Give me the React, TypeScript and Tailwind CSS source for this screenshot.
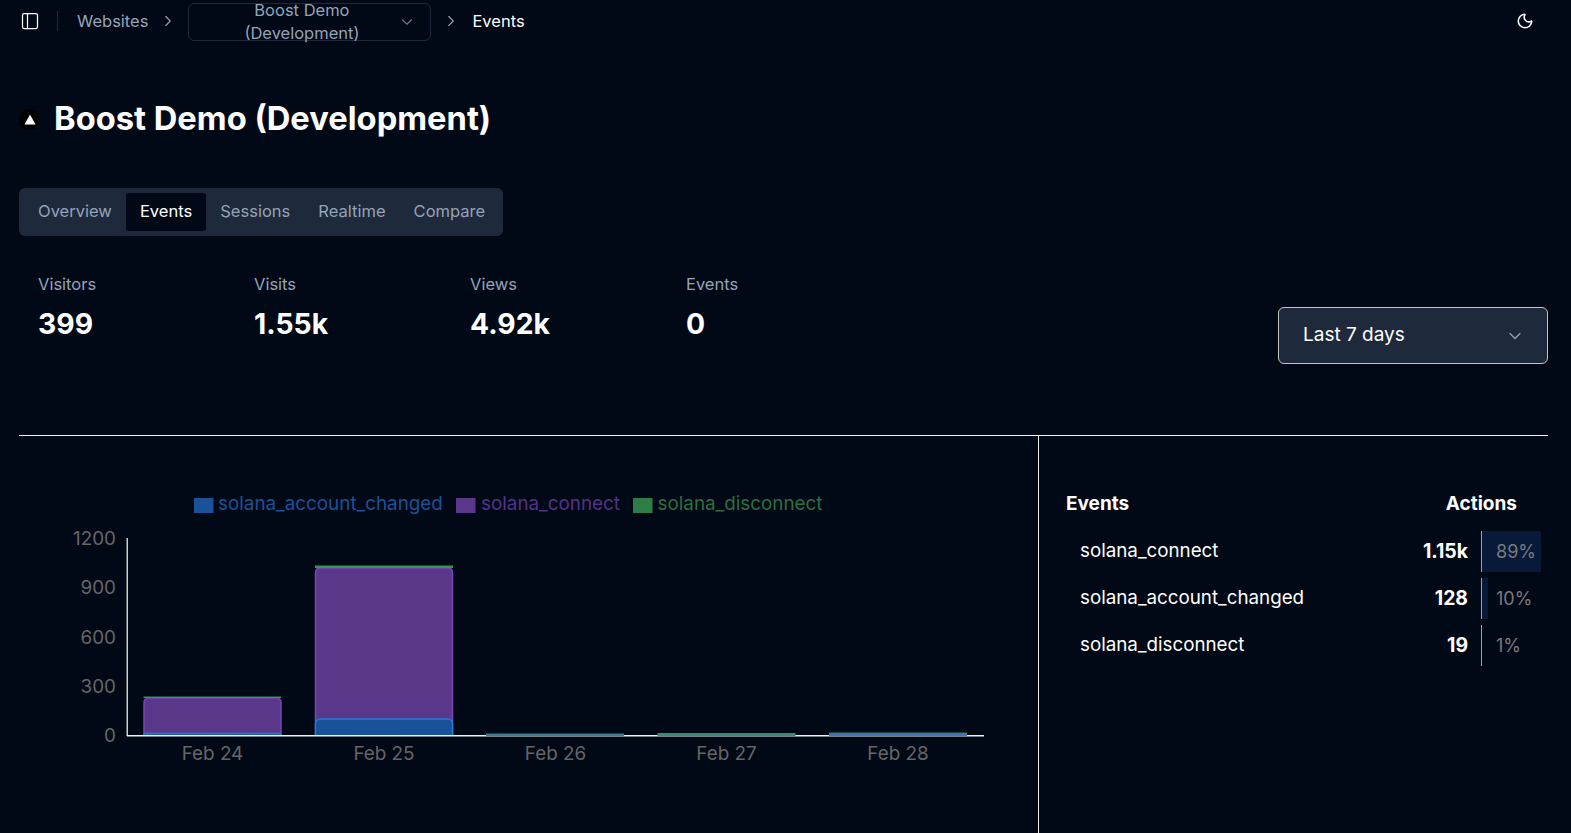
import { ChevronDown, ChevronRight, Moon, PanelLeft } from "lucide-react";

function topRound(x: number, y: number, w: number, h: number, r: number) {
  const rr = Math.min(r, h);
  return `M${x} ${y + h}V${y + rr}Q${x} ${y} ${x + rr} ${y}H${x + w - rr}Q${x + w} ${y} ${x + w} ${y + rr}V${y + h}`;
}

const TABS = ["Overview", "Events", "Sessions", "Realtime", "Compare"];
const STATS = [
  ["Visitors", "399"],
  ["Visits", "1.55k"],
  ["Views", "4.92k"],
  ["Events", "0"],
];
const ROWS = [
  { name: "solana_connect", value: "1.15k", pct: "89%", bar: "w-[59px]" },
  { name: "solana_account_changed", value: "128", pct: "10%", bar: "w-[6px]" },
  { name: "solana_disconnect", value: "19", pct: "1%", bar: "w-0" },
];

function Chart() {
  const blue = "#1a5299";
  const blueS = "#2478de";
  const purple = "#5b378a";
  const purpleS = "#7747b8";
  const green = "#2d7d46";
  const ticks: [string, number][] = [
    ["1200", 538],
    ["900", 587.5],
    ["600", 637],
    ["300", 686],
    ["0", 735.5],
  ];
  const days: [string, number][] = [
    ["Feb 24", 212.5],
    ["Feb 25", 384],
    ["Feb 26", 555.5],
    ["Feb 27", 726.5],
    ["Feb 28", 898],
  ];
  return (
    <svg viewBox="19 436 1019 397" className="block w-[1019px] h-[397px]">
      <g fontSize="18.85" fontFamily="Inter, sans-serif">
        <rect x="194" y="498" width="19.5" height="15" fill={blue} />
        <text x="218" y="510" fill="#1a5299">solana_account_changed</text>
        <rect x="456" y="498" width="19.5" height="15" fill={purple} />
        <text x="481" y="510" fill="#55318a">solana_connect</text>
        <rect x="633" y="498" width="19.5" height="15" fill={green} />
        <text x="657.5" y="510" fill="#2a7040">solana_disconnect</text>
        {ticks.map(([t, y]) => (
          <text key={t} x="116" y={y + 6.5} textAnchor="end" fill="#666">{t}</text>
        ))}
        {days.map(([t, x]) => (
          <text key={t} x={x} y="760" textAnchor="middle" fill="#666">{t}</text>
        ))}
      </g>
      <path d={topRound(144, 698, 137, 37, 5)} fill={purple} stroke={purpleS} strokeWidth="1.5" />
      <path d={topRound(144, 733.5, 137, 2, 1)} fill={blue} stroke={blueS} strokeWidth="1.5" />
      <rect x="143.5" y="696.5" width="137.5" height="1.5" fill="#2f9a4e" />
      <path d={topRound(315.5, 568, 137, 168, 5)} fill={purple} stroke={purpleS} strokeWidth="1.5" />
      <path d={topRound(315.5, 719, 137, 17, 5)} fill={blue} stroke={blueS} strokeWidth="1.5" />
      <rect x="315" y="565.5" width="138" height="2.5" fill="#2f9a4e" />
      <rect x="126.5" y="538" width="1.5" height="198" fill="#cfcfcf" />
      <rect x="127" y="735" width="857" height="1.5" fill="#f2f2f2" />
      <rect x="486" y="733.5" width="138" height="2.5" fill="#3d7d8f" />
      <rect x="657.5" y="733" width="138" height="3" fill="#3a8a72" />
      <rect x="829" y="732.5" width="138" height="1.5" fill="#2d8a4e" />
      <rect x="829" y="734" width="138" height="2" fill="#4a6fc0" />
    </svg>
  );
}

export default function App() {
  return (
    <div className="h-[833px] overflow-hidden bg-[#010916] text-white [font-family:Inter,sans-serif]">
      <header className="h-[42px] flex items-center pl-[20px] pr-[37px]">
        <PanelLeft size={20} strokeWidth={1.5} className="text-white" />
        <div className="ml-[17px] h-[20px] w-px bg-[#1e293b]" />
        <span className="ml-[19px] text-[16.5px] text-[#94a3b8]">Websites</span>
        <ChevronRight size={18} strokeWidth={1.5} className="ml-[11px] text-[#94a3b8]" />
        <div className="ml-[11px] mt-[2px] h-[38px] w-[243px] rounded-md border border-[#1e293b] flex items-center pl-[16px] pr-[14px]">
          <span className="flex-1 text-center text-[16.5px] leading-[23px] text-[#94a3b8]">Boost Demo<br />(Development)</span>
          <ChevronDown size={18} strokeWidth={1.5} className="text-[#64748b]" />
        </div>
        <ChevronRight size={18} strokeWidth={1.5} className="ml-[11px] text-[#94a3b8]" />
        <span className="ml-[12px] text-[16.5px] text-white">Events</span>
        <Moon size={18} strokeWidth={2} className="ml-auto text-white" />
      </header>

      <main className="pl-[19px] pr-[23px]">
        <div className="mt-[56px] flex items-center h-[42px]">
          <span className="w-[21px] h-[21px] rounded-full bg-black flex items-center justify-center">
            <svg width="12" height="11" viewBox="0 0 12 11"><path d="M6 0.5L11.5 10.5H0.5Z" fill="#fff" /></svg>
          </span>
          <h1 className="ml-[14px] pb-[2px] text-[32.7px] leading-[36px] font-bold">Boost Demo (Development)</h1>
        </div>

        <div className="mt-[48px] inline-flex h-[48px] items-center rounded-md bg-[#1e293b] py-[5px] pl-[5px] pr-[4px]">
          {TABS.map((t) => (
            <span
              key={t}
              className={`h-[38px] px-[14px] pb-[2px] flex items-center rounded-[3px] text-[16.55px] ${t === "Events" ? "bg-[#010916] text-white" : "text-[#94a3b8]"}`}
            >
              {t}
            </span>
          ))}
        </div>

        <div className="mt-[34px] h-[110px] flex items-start justify-between">
          <div className="flex pl-[19px] pt-[2px]">
            {STATS.map(([label, value]) => (
              <div key={label} className="w-[216px]">
                <div className="text-[16.5px] leading-[24px] text-[#94a3b8]">{label}</div>
                <div className="mt-[10px] text-[28.3px] leading-[36px] font-bold">{value}</div>
              </div>
            ))}
          </div>
          <div className="mt-[37px] h-[57px] w-[270px] rounded-md border border-[#c4c4c4] bg-[#1e293b] flex items-center justify-between pl-[24px] pr-[22px]">
            <span className="text-[19px]">Last 7 days</span>
            <ChevronDown size={20} strokeWidth={1.5} className="text-[#94a3b8]" />
          </div>
        </div>

        <div className="mt-[55px] border-t border-[#f2f2f2] flex">
          <div className="w-[1020px] border-r border-[#f2f2f2]">
            <Chart />
          </div>
          <div className="flex-1 pl-[27px] pt-[56px] pr-[7px]">
            <div className="flex justify-between text-[19px] leading-[24px] font-bold pr-[24px]">
              <span>Events</span>
              <span>Actions</span>
            </div>
            <div className="mt-[15px] flex flex-col gap-[6px]">
              {ROWS.map((r) => (
                <div key={r.name} className="h-[41px] flex items-center pl-[14px] text-[18.8px]">
                  <span className="flex-1">{r.name}</span>
                  <span className="font-bold text-[19.4px]">{r.value}</span>
                  <div className="relative ml-[13px] h-full w-[60px] border-l border-[#a3a3a3] flex items-center pl-[14px] text-[18px] text-[#7a7a7a]">
                    <div className={`absolute left-0 top-0 bottom-0 bg-[#081a3a] ${r.bar}`} />
                    <span className="relative">{r.pct}</span>
                  </div>
                </div>
              ))}
            </div>
          </div>
        </div>
      </main>
    </div>
  );
}
